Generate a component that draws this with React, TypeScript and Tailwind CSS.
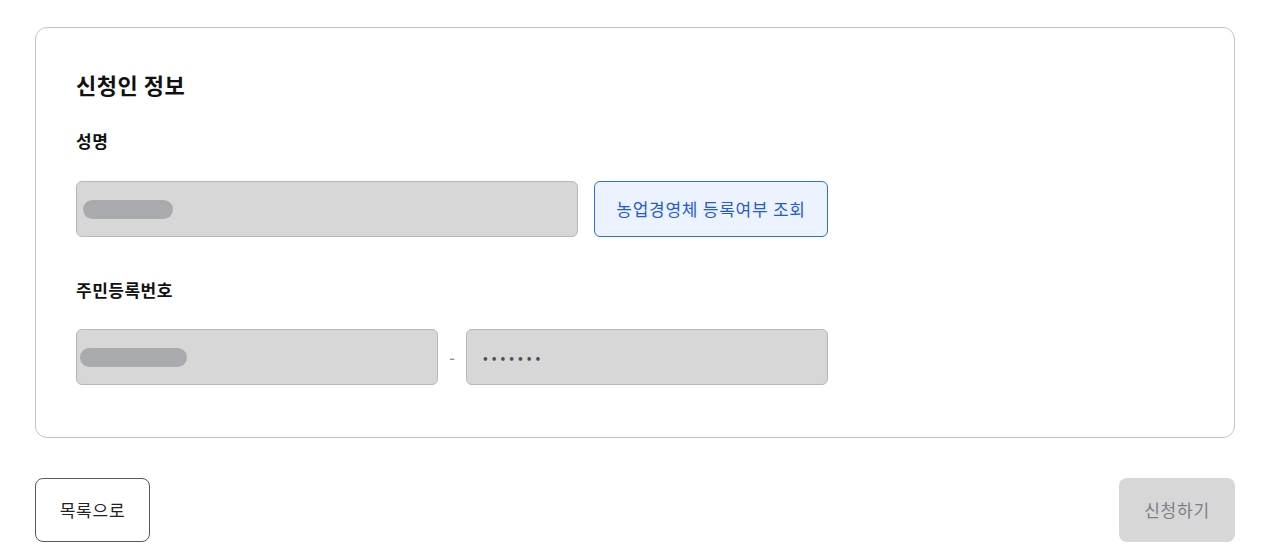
import React from "react";

const font = { fontFamily: '"Noto Sans CJK KR", "Noto Sans", sans-serif' };

function MaskedInput({ width, pill, children }: { width: string; pill?: string; children?: React.ReactNode }) {
  return (
    <div className={`flex h-14 items-center rounded-md border border-[#b4b7bb] bg-[#d7d7d7] ${width}`}>
      {pill && <div className={`h-[19px] rounded-full bg-[#a9aaad] ${pill}`} />}
      {children}
    </div>
  );
}

export default function App() {
  return (
    <div className="min-h-screen bg-white pt-[27px] pl-[35px] text-[#111]" style={font}>
      <div className="w-[1200px]">
        {/* Applicant card */}
        <div className="rounded-xl border border-[#c2c4c8] px-10 pt-10 pb-[52px]">
          <h2 className="text-[22px] font-bold leading-[33px] tracking-[0.5px]">신청인 정보</h2>

          <div className="mt-7 text-[17px] font-bold leading-6 tracking-[0.5px]">성명</div>
          <div className="mt-7 flex gap-4">
            <MaskedInput width="w-[502px]" pill="ml-[6px] w-[90px]" />
            <button className="h-14 w-[234px] rounded-md border border-[#2f6fe4] bg-[#ecf2fe] text-[17px] tracking-[0.75px] text-[#1f5cd6]">
              농업경영체 등록여부 조회
            </button>
          </div>

          <div className="mt-[41px] text-[17px] font-bold leading-6 tracking-[0.5px]">주민등록번호</div>
          <div className="mt-[27px] flex items-center">
            <MaskedInput width="w-[362px]" pill="ml-[3px] w-[107px]" />
            <span className="w-[28px] text-center text-[16px] font-medium text-[#8a8f96]">-</span>
            <MaskedInput width="w-[362px]">
              <span className="ml-4 text-[14px] tracking-[4px] text-[#4b5058]">•••••••</span>
            </MaskedInput>
          </div>
        </div>

        {/* Actions */}
        <div className="mt-10 flex justify-between">
          <button className="h-16 w-[115px] rounded-lg border border-[#55585d] bg-white text-[17px] tracking-[0.75px] text-[#222]">
            목록으로
          </button>
          <button className="h-16 w-[116px] rounded-lg bg-[#d7d7d7] text-[17px] tracking-[0.75px] text-[#7b7f86]">
            신청하기
          </button>
        </div>
      </div>
    </div>
  );
}
